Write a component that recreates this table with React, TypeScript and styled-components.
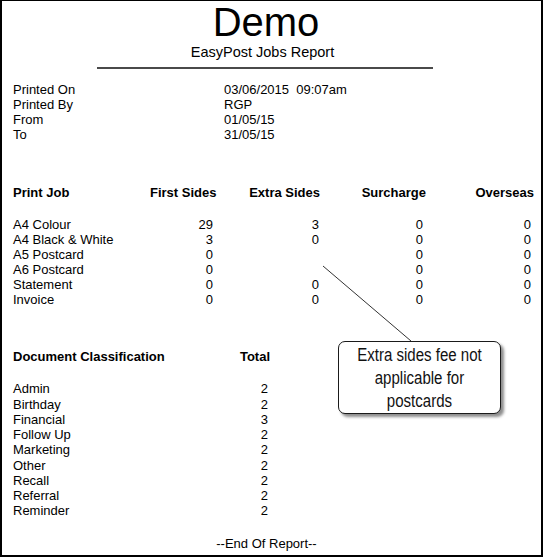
import React from "react";
import styled, { createGlobalStyle } from "styled-components";

const Global = createGlobalStyle`
  html, body { margin: 0; padding: 0; background: #fff; }
  body { font-family: "Liberation Sans", Arial, sans-serif; color: #000; }
`;

const Page = styled.div`
  position: relative;
  box-sizing: border-box;
  width: 543px;
  height: 557px;
  border: 2px solid #000;
  border-top-width: 1px;
  padding: 1px 9px 0 11px;
  display: flex;
  flex-direction: column;
  font-size: 13px;
  line-height: 15px;
`;

const Title = styled.h1`
  margin: 0;
  padding-right: 13px;
  font-weight: normal;
  font-size: 40px;
  line-height: 40px;
  text-align: center;
`;

const Subtitle = styled.div`
  margin-top: 2px;
  padding-right: 20px;
  font-size: 14.5px;
  line-height: 17px;
  text-align: center;
`;

const Rule = styled.hr`
  margin: 6px 0 0 84px;
  width: 336px;
  border: none;
  height: 2px;
  background: #4a4a4a;
`;

const InfoGrid = styled.div`
  margin-top: 13px;
  display: grid;
  grid-template-columns: 211px auto;
`;

const JobTable = styled.div`
  margin-top: 43px;
  display: grid;
  grid-template-columns: 137px 66px 104px 106px 108px;
`;

const HeadCell = styled.div<{ $right?: boolean }>`
  font-weight: bold;
  white-space: nowrap;
  text-align: ${(p) => (p.$right ? "right" : "left")};
  margin-bottom: 17px;
`;

const Cell = styled.div<{ $right?: boolean; $pad?: number }>`
  text-align: ${(p) => (p.$right ? "right" : "left")};
  padding-right: ${(p) => p.$pad ?? 0}px;
  white-space: pre;
`;

const ClassTable = styled.div`
  margin-top: 42px;
  display: grid;
  grid-template-columns: 200px 57px;
  line-height: 15.25px;
`;

const Footer = styled.div`
  margin-top: 17px;
  padding-right: 12px;
  text-align: center;
`;

const Callout = styled.div`
  position: absolute;
  left: 336px;
  top: 340px;
  box-sizing: border-box;
  width: 163px;
  height: 73px;
  border: 1px solid #1a1a1a;
  border-radius: 7px;
  background: #fff;
  box-shadow: 3px 3px 3px rgba(0, 0, 0, 0.45);
  padding-top: 2px;
  display: flex;
  justify-content: center;
  font-family: "Liberation Sans Narrow", "Arial Narrow", "Liberation Sans", sans-serif;
  font-size: 17.5px;
  line-height: 23px;
  color: #111;
`;

const CalloutText = styled.div`
  text-align: center;
  white-space: nowrap;
  transform: scaleX(0.86);
`;

const Pointer = styled.svg`
  position: absolute;
  left: 0;
  top: 0;
  width: 543px;
  height: 557px;
  pointer-events: none;
`;

const jobs: [string, string, string, string, string][] = [
  ["A4 Colour", "29", "3", "0", "0"],
  ["A4 Black & White", "3", "0", "0", "0"],
  ["A5 Postcard", "0", "", "0", "0"],
  ["A6 Postcard", "0", "", "0", "0"],
  ["Statement", "0", "0", "0", "0"],
  ["Invoice", "0", "0", "0", "0"],
];

const classes: [string, string][] = [
  ["Admin", "2"],
  ["Birthday", "2"],
  ["Financial", "3"],
  ["Follow Up", "2"],
  ["Marketing", "2"],
  ["Other", "2"],
  ["Recall", "2"],
  ["Referral", "2"],
  ["Reminder", "2"],
];

const info: [string, string][] = [
  ["Printed On", "03/06/2015  09:07am"],
  ["Printed By", "RGP"],
  ["From", "01/05/15"],
  ["To", "31/05/15"],
];

const pads = [0, 3, 1, 3, 3];

export default function App() {
  return (
    <>
      <Global />
      <Page>
        <Title>Demo</Title>
        <Subtitle>EasyPost Jobs Report</Subtitle>
        <Rule />
        <InfoGrid>
          {info.map(([k, v]) => (
            <React.Fragment key={k}>
              <Cell>{k}</Cell>
              <Cell>{v}</Cell>
            </React.Fragment>
          ))}
        </InfoGrid>
        <JobTable>
          <HeadCell>Print Job</HeadCell>
          <HeadCell $right>First Sides</HeadCell>
          <HeadCell $right>Extra Sides</HeadCell>
          <HeadCell $right>Surcharge</HeadCell>
          <HeadCell $right>Overseas</HeadCell>
          {jobs.map((row) =>
            row.map((c, i) => (
              <Cell key={row[0] + i} $right={i > 0} $pad={pads[i]}>
                {c}
              </Cell>
            ))
          )}
        </JobTable>
        <ClassTable>
          <HeadCell>Document Classification</HeadCell>
          <HeadCell $right>Total</HeadCell>
          {classes.map(([k, v]) => (
            <React.Fragment key={k}>
              <Cell>{k}</Cell>
              <Cell $right $pad={2}>
                {v}
              </Cell>
            </React.Fragment>
          ))}
        </ClassTable>
        <Footer>--End Of Report--</Footer>
        <Pointer viewBox="0 0 543 557">
          <line x1="321" y1="265" x2="409" y2="340" stroke="#333" strokeWidth="1" />
        </Pointer>
        <Callout>
          <CalloutText>
            Extra sides fee not
            <br />
            applicable for
            <br />
            postcards
          </CalloutText>
        </Callout>
      </Page>
    </>
  );
}
